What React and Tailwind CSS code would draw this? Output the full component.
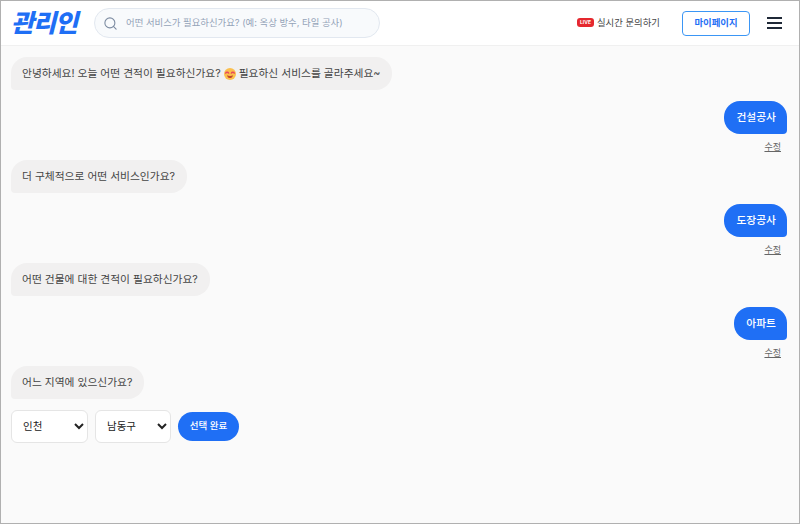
import { Search } from 'lucide-react';

const font = { fontFamily: '"Inter", "Noto Sans CJK KR", sans-serif' };

const BotBubble = ({ children }) => (
  <div className="self-start flex items-center h-[33px] pt-[1px] pl-[11px] pr-[12px] rounded-[16px] rounded-bl-[4px] bg-[#f1f0f0] text-[10.75px] text-[#444444]">
    {children}
  </div>
);

const UserBubble = ({ text }) => (
  <div className="self-end flex flex-col items-end -mb-[5px]">
    <div className="flex items-center h-[33px] pt-[2px] pl-[12px] pr-[11px] rounded-[16px] rounded-br-[4px] bg-[#1f6ff5] text-[10.75px] font-medium text-white">
      {text}
    </div>
    <button className="mt-[5px] mr-[6px] h-[15px] text-[9px] leading-[15px] text-[#666666] underline">수정</button>
  </div>
);

const Smile = () => (
  <svg width="12" height="12" viewBox="0 0 12 12" className="inline-block mx-[3px]">
    <circle cx="6" cy="6" r="6" fill="#fbbf4d" />
    <path d="M1.600 5.200c.5-1.300 2.600-1.300 3.100 0M7.300 5.200c.5-1.300 2.600-1.300 3.100 0" stroke="#e8475f" strokeWidth="1.300" fill="none" strokeLinecap="round" />
    <path d="M3 7.200c1.600 1 4.400 1 6 0-.4 2-1.700 2.800-3 2.800S3.400 9.200 3 7.200z" fill="#c2452f" />
  </svg>
);

export default function App() {
  return (
    <div style={font} className="w-[800px] h-[524px] border border-[#b0b0b0] bg-[#fafafa] overflow-hidden flex flex-col">
      <header className="h-[45px] shrink-0 flex items-center bg-white border-b border-[#f0f0f0] pl-[10px] pr-[17px]">
        <div className="w-[69px] text-[25px] leading-none font-black italic tracking-[-1px] text-[#1f6ff5]">관리인</div>
        <div className="ml-[14px] w-[286px] h-[30px] flex items-center rounded-full border border-[#e2e8f0] bg-[#f8fafc] pl-[8px]">
          <Search size={15} strokeWidth={1.75} className="text-[#7c8ba1]" />
          <span className="ml-[8px] text-[9.4px] text-[#94a3b8]">어떤 서비스가 필요하신가요? (예: 옥상 방수, 타일 공사)</span>
        </div>
        <div className="ml-auto flex items-center">
          <span className="flex items-center justify-center w-[17px] h-[9px] rounded-[3px] bg-[#e5282e] text-[5px] font-bold text-white leading-none">LIVE</span>
          <span className="ml-[3px] mr-[-1px] text-[9.4px] text-[#444444]">실시간 문의하기</span>
        </div>
        <button className="ml-[23px] w-[68px] h-[25px] rounded-[4px] border border-[#3b96f5] bg-white text-[9.4px] font-semibold text-[#1f6ff5]">마이페이지</button>
        <svg width="15" height="14" viewBox="0 0 15 14" className="ml-[17px]">
          <path d="M0 2h15M0 7h15M0 12h15" stroke="#1f2937" strokeWidth="2" />
        </svg>
      </header>
      <main className="flex-1 flex flex-col gap-[11px] pt-[11px] pl-[10px] pr-[12px]">
        <BotBubble>안녕하세요! 오늘 어떤 견적이 필요하신가요?<Smile />필요하신 서비스를 골라주세요~</BotBubble>
        <UserBubble text="건설공사" />
        <BotBubble>더 구체적으로 어떤 서비스인가요?</BotBubble>
        <UserBubble text="도장공사" />
        <BotBubble>어떤 건물에 대한 견적이 필요하신가요?</BotBubble>
        <UserBubble text="아파트" />
        <BotBubble>어느 지역에 있으신가요?</BotBubble>
        <div className="flex items-center gap-[7px]">
          <select defaultValue="인천" className="w-[77px] h-[33px] pl-[7px] rounded-[6px] border border-[#e5e5e5] bg-white text-[10.5px] text-[#222222]">
            <option>인천</option>
            <option>서울</option>
          </select>
          <select defaultValue="남동구" className="w-[76px] h-[33px] pl-[7px] rounded-[6px] border border-[#e5e5e5] bg-white text-[10.5px] text-[#222222]">
            <option>남동구</option>
            <option>연수구</option>
          </select>
          <button className="w-[61px] h-[29px] rounded-full bg-[#1f6ff5] text-[9.5px] font-medium text-white">선택 완료</button>
        </div>
      </main>
    </div>
  );
}
